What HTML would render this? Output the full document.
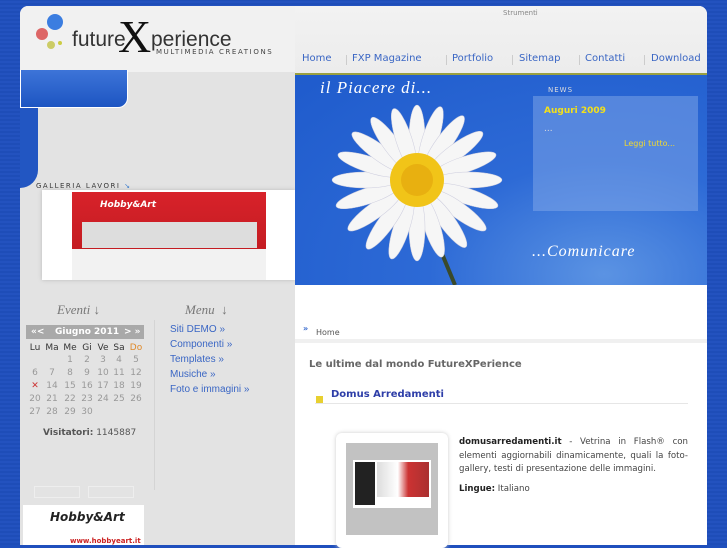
<!DOCTYPE html>
<html><head><meta charset="utf-8"><style>
*{margin:0;padding:0;box-sizing:border-box}
body{width:727px;height:545px;overflow:hidden;background:#1f4fbd;font-family:"DejaVu Sans","Liberation Sans",sans-serif;position:relative}
.a{position:absolute}
.nav a{position:absolute;top:53px;font-size:10px;color:#3a66c4;text-decoration:none}
.sep{position:absolute;top:55px;width:1px;height:10px;background:#ccc}
.cal{font-size:9px;color:#999}
.cal span{position:absolute;width:16px;text-align:center}
.menu a{display:block;color:#3a66c4;font-family:"Liberation Sans",sans-serif;font-size:10px;height:15px;text-decoration:none}
</style></head><body>
<div class="a" style="left:0;top:0;width:727px;height:545px;background:repeating-linear-gradient(0deg,#1e4db8 0 2px,#2352bf 2px 4px)"></div>
<div class="a" style="left:20px;top:6px;width:275px;height:539px;background:#e3e3e3;border-radius:8px 0 0 0"></div>
<div class="a" style="left:20px;top:6px;width:275px;height:66px;background:#f1f1f1;border-radius:8px 0 0 0"></div>
<div class="a" style="left:20px;top:70px;width:108px;height:38px;background:linear-gradient(#3d74d8,#1d55c2);border-radius:0 0 10px 0;border:1px solid #fff;border-top:none"></div>
<div class="a" style="left:20px;top:108px;width:18px;height:80px;background:#2256c2;border-radius:0 0 60px 0"></div>
<svg class="a" style="left:34px;top:12px" width="30" height="45"><circle cx="21" cy="10" r="8" fill="#3b7de0"/><circle cx="8" cy="22" r="6" fill="#d66"/><circle cx="17" cy="33" r="4" fill="#cc6"/><circle cx="26" cy="31" r="2" fill="#cc4"/></svg>
<div class="a" style="left:72px;top:28px;font-family:'Liberation Sans',sans-serif;font-size:21px;color:#333">future</div>
<div class="a" style="left:118px;top:14px;font-family:'Liberation Serif',serif;font-size:46px;color:#111;line-height:46px">X</div>
<div class="a" style="left:151px;top:28px;font-family:'Liberation Sans',sans-serif;font-size:21px;color:#333">perience</div>
<div class="a" style="left:156px;top:48px;font-size:7px;letter-spacing:1.6px;color:#444">MULTIMEDIA CREATIONS</div>
<div class="a" style="left:36px;top:182px;font-size:7px;letter-spacing:1.5px;color:#333">GALLERIA LAVORI <span style="color:#37c">↘</span></div>
<div class="a" style="left:42px;top:190px;width:253px;height:90px;background:#fff;box-shadow:0 0 4px #bbb"></div>
<div class="a" style="left:72px;top:192px;width:194px;height:57px;background:linear-gradient(#d8222a,#c41c22)"></div>
<div class="a" style="left:82px;top:222px;width:175px;height:26px;background:#ddd"></div>
<div class="a" style="left:72px;top:249px;width:194px;height:31px;background:#f2f2f2"></div>
<div class="a" style="left:100px;top:200px;font-size:9px;color:#fff;font-style:italic;font-weight:bold">Hobby&amp;Art</div>
<div class="a" style="left:57px;top:302px;font-family:'Liberation Serif',serif;font-style:italic;font-size:13px;color:#777">Eventi ↓</div>
<div class="a" style="left:185px;top:302px;font-family:'Liberation Serif',serif;font-style:italic;font-size:13px;color:#777">Menu &nbsp;↓</div>
<div class="a" style="left:26px;top:325px;width:118px;height:14px;background:#a9a9a9;color:#fff;font-size:9px;font-weight:bold;line-height:14px"><span style="position:absolute;left:5px">«&lt;</span><span style="position:absolute;left:29px">Giugno 2011</span><span style="position:absolute;left:98px">&gt; »</span></div>
<div class="a cal" style="left:27px;top:343px;width:120px;height:80px;color:#333">
<span style="left:0;top:0">Lu</span><span style="left:17px;top:0">Ma</span><span style="left:35px;top:0">Me</span><span style="left:52px;top:0">Gi</span><span style="left:68px;top:0">Ve</span><span style="left:84px;top:0">Sa</span><span style="left:101px;top:0;color:#e08a2a">Do</span>
</div>
<div class="a cal" style="left:27px;top:355px">
<span style="left:35px;top:0">1</span><span style="left:52px;top:0">2</span><span style="left:68px;top:0">3</span><span style="left:84px;top:0">4</span><span style="left:101px;top:0">5</span>
<span style="left:0;top:13px">6</span><span style="left:17px;top:13px">7</span><span style="left:35px;top:13px">8</span><span style="left:52px;top:13px">9</span><span style="left:68px;top:13px">10</span><span style="left:84px;top:13px">11</span><span style="left:101px;top:13px">12</span>
<span style="left:0;top:26px;color:#c33;font-weight:bold">✕</span><span style="left:17px;top:26px">14</span><span style="left:35px;top:26px">15</span><span style="left:52px;top:26px">16</span><span style="left:68px;top:26px">17</span><span style="left:84px;top:26px">18</span><span style="left:101px;top:26px">19</span>
<span style="left:0;top:39px">20</span><span style="left:17px;top:39px">21</span><span style="left:35px;top:39px">22</span><span style="left:52px;top:39px">23</span><span style="left:68px;top:39px">24</span><span style="left:84px;top:39px">25</span><span style="left:101px;top:39px">26</span>
<span style="left:0;top:52px">27</span><span style="left:17px;top:52px">28</span><span style="left:35px;top:52px">29</span><span style="left:52px;top:52px">30</span>
</div>
<div class="a" style="left:43px;top:428px;font-size:9px;color:#555"><b>Visitatori:</b> 1145887</div>
<div class="a" style="left:154px;top:320px;width:1px;height:170px;background:#d4d4d4"></div>
<div class="a menu" style="left:170px;top:324px"><a>Siti DEMO »</a><a>Componenti »</a><a>Templates »</a><a>Musiche »</a><a>Foto e immagini »</a></div>
<div class="a" style="left:34px;top:486px;width:46px;height:12px;border:1px solid #eee"></div>
<div class="a" style="left:88px;top:486px;width:46px;height:12px;border:1px solid #eee"></div>
<div class="a" style="left:23px;top:505px;width:121px;height:40px;background:#fff"></div>
<div class="a" style="left:50px;top:510px;font-size:12px;font-weight:bold;font-style:italic;color:#222">Hobby&amp;Art</div>
<div class="a" style="left:70px;top:537px;font-size:7px;font-weight:bold;color:#c22">www.hobbyeart.it</div>
<div class="a" style="left:295px;top:6px;width:412px;height:539px;background:#fff;border-radius:0 8px 0 0"></div>
<div class="a" style="left:295px;top:6px;width:412px;height:67px;background:linear-gradient(#f2f2f2,#ececec);border-radius:0 8px 0 0"></div>
<div class="a" style="left:503px;top:9px;font-size:7px;color:#888">Strumenti</div>
<div class="nav"><a style="left:302px">Home</a><div class="sep" style="left:346px"></div><a style="left:352px">FXP Magazine</a><div class="sep" style="left:446px"></div><a style="left:452px">Portfolio</a><div class="sep" style="left:512px"></div><a style="left:519px">Sitemap</a><div class="sep" style="left:579px"></div><a style="left:585px">Contatti</a><div class="sep" style="left:644px"></div><a style="left:651px">Download</a></div>
<div class="a" style="left:295px;top:73px;width:412px;height:2px;background:#9aa040"></div>
<div class="a" style="left:295px;top:75px;width:412px;height:210px;background:radial-gradient(ellipse at 75% 95%,#5b93e3,#2d6ad6 40%,#1f5bcc)"></div>
<svg class="a" style="left:295px;top:75px" width="412" height="210">
<line x1="135" y1="150" x2="160" y2="210" stroke="#3a4a2a" stroke-width="4"/>
<g fill="#f6f6f6" stroke="#ccd" stroke-width="0.5" transform="translate(122,105)">
<ellipse rx="8" ry="33" transform="rotate(0) translate(0,-42)"/><ellipse rx="8" ry="33" transform="rotate(18) translate(0,-44)"/><ellipse rx="8" ry="33" transform="rotate(36) translate(0,-46)"/><ellipse rx="8" ry="33" transform="rotate(54) translate(0,-48)"/><ellipse rx="8" ry="33" transform="rotate(72) translate(0,-50)"/><ellipse rx="8" ry="33" transform="rotate(90) translate(0,-52)"/><ellipse rx="8" ry="33" transform="rotate(108) translate(0,-52)"/><ellipse rx="8" ry="33" transform="rotate(126) translate(0,-52)"/><ellipse rx="8" ry="33" transform="rotate(144) translate(0,-50)"/><ellipse rx="8" ry="33" transform="rotate(162) translate(0,-48)"/><ellipse rx="8" ry="33" transform="rotate(180) translate(0,-48)"/><ellipse rx="8" ry="33" transform="rotate(198) translate(0,-50)"/><ellipse rx="8" ry="33" transform="rotate(216) translate(0,-52)"/><ellipse rx="8" ry="33" transform="rotate(234) translate(0,-52)"/><ellipse rx="8" ry="33" transform="rotate(252) translate(0,-52)"/><ellipse rx="8" ry="33" transform="rotate(270) translate(0,-52)"/><ellipse rx="8" ry="33" transform="rotate(288) translate(0,-50)"/><ellipse rx="8" ry="33" transform="rotate(306) translate(0,-47)"/><ellipse rx="8" ry="33" transform="rotate(324) translate(0,-44)"/><ellipse rx="8" ry="33" transform="rotate(342) translate(0,-42)"/>
</g>
<circle cx="122" cy="105" r="27" fill="#f1c418"/><circle cx="122" cy="105" r="16" fill="#e8b010"/>
</svg>
<div class="a" style="left:320px;top:78px;font-family:'Liberation Serif',serif;font-style:italic;font-size:17px;color:#fff;letter-spacing:1px">il Piacere di...</div>
<div class="a" style="left:532px;top:243px;font-family:'Liberation Serif',serif;font-style:italic;font-size:16px;color:#fff;letter-spacing:1px">...Comunicare</div>
<div class="a" style="left:548px;top:86px;font-size:7px;color:#ddd;letter-spacing:1px">NEWS</div>
<div class="a" style="left:533px;top:96px;width:165px;height:115px;background:rgba(140,175,235,.45)"></div>
<div class="a" style="left:544px;top:106px;font-size:9px;font-weight:bold;color:#f3e01a">Auguri 2009</div>
<div class="a" style="left:544px;top:124px;font-size:9px;color:#ddd">...</div>
<div class="a" style="left:624px;top:139px;font-size:8px;color:#f0d830">Leggi tutto...</div>
<div class="a" style="left:303px;top:324px;font-size:8px;color:#36c;font-weight:bold">»</div>
<div class="a" style="left:316px;top:328px;font-size:8px;color:#555">Home</div>
<div class="a" style="left:295px;top:339px;width:412px;height:4px;background:#f0f0f0"></div>
<div class="a" style="left:309px;top:359px;font-size:10px;font-weight:bold;color:#666">Le ultime dal mondo FutureXPerience</div>
<div class="a" style="left:316px;top:396px;width:7px;height:7px;background:#e8d030"></div>
<div class="a" style="left:331px;top:389px;font-size:10px;font-weight:bold;color:#2e3ea8">Domus Arredamenti</div>
<div class="a" style="left:315px;top:403px;width:373px;height:1px;background:#e6e6e6"></div>
<div class="a" style="left:336px;top:433px;width:112px;height:115px;background:#fff;border-radius:6px;box-shadow:0 0 4px #ccc"></div>
<div class="a" style="left:346px;top:443px;width:92px;height:92px;background:#c2c2c2"></div>
<div class="a" style="left:353px;top:460px;width:78px;height:48px;background:#fff"></div>
<div class="a" style="left:355px;top:462px;width:20px;height:43px;background:#222"></div>
<div class="a" style="left:377px;top:462px;width:52px;height:35px;background:linear-gradient(90deg,#ddd,#fff 40%,#c33 60%,#aa3030)"></div>
<div class="a" style="left:459px;top:436px;width:229px;font-size:8.6px;line-height:13.5px;color:#444;text-align:justify"><b style="color:#222">domusarredamenti.it</b> - Vetrina in Flash® con elementi aggiornabili dinamicamente, quali la foto-gallery, testi di presentazione delle immagini.</div>
<div class="a" style="left:459px;top:484px;font-size:8.6px;color:#444"><b style="color:#222">Lingue:</b> Italiano</div>
</body></html>
